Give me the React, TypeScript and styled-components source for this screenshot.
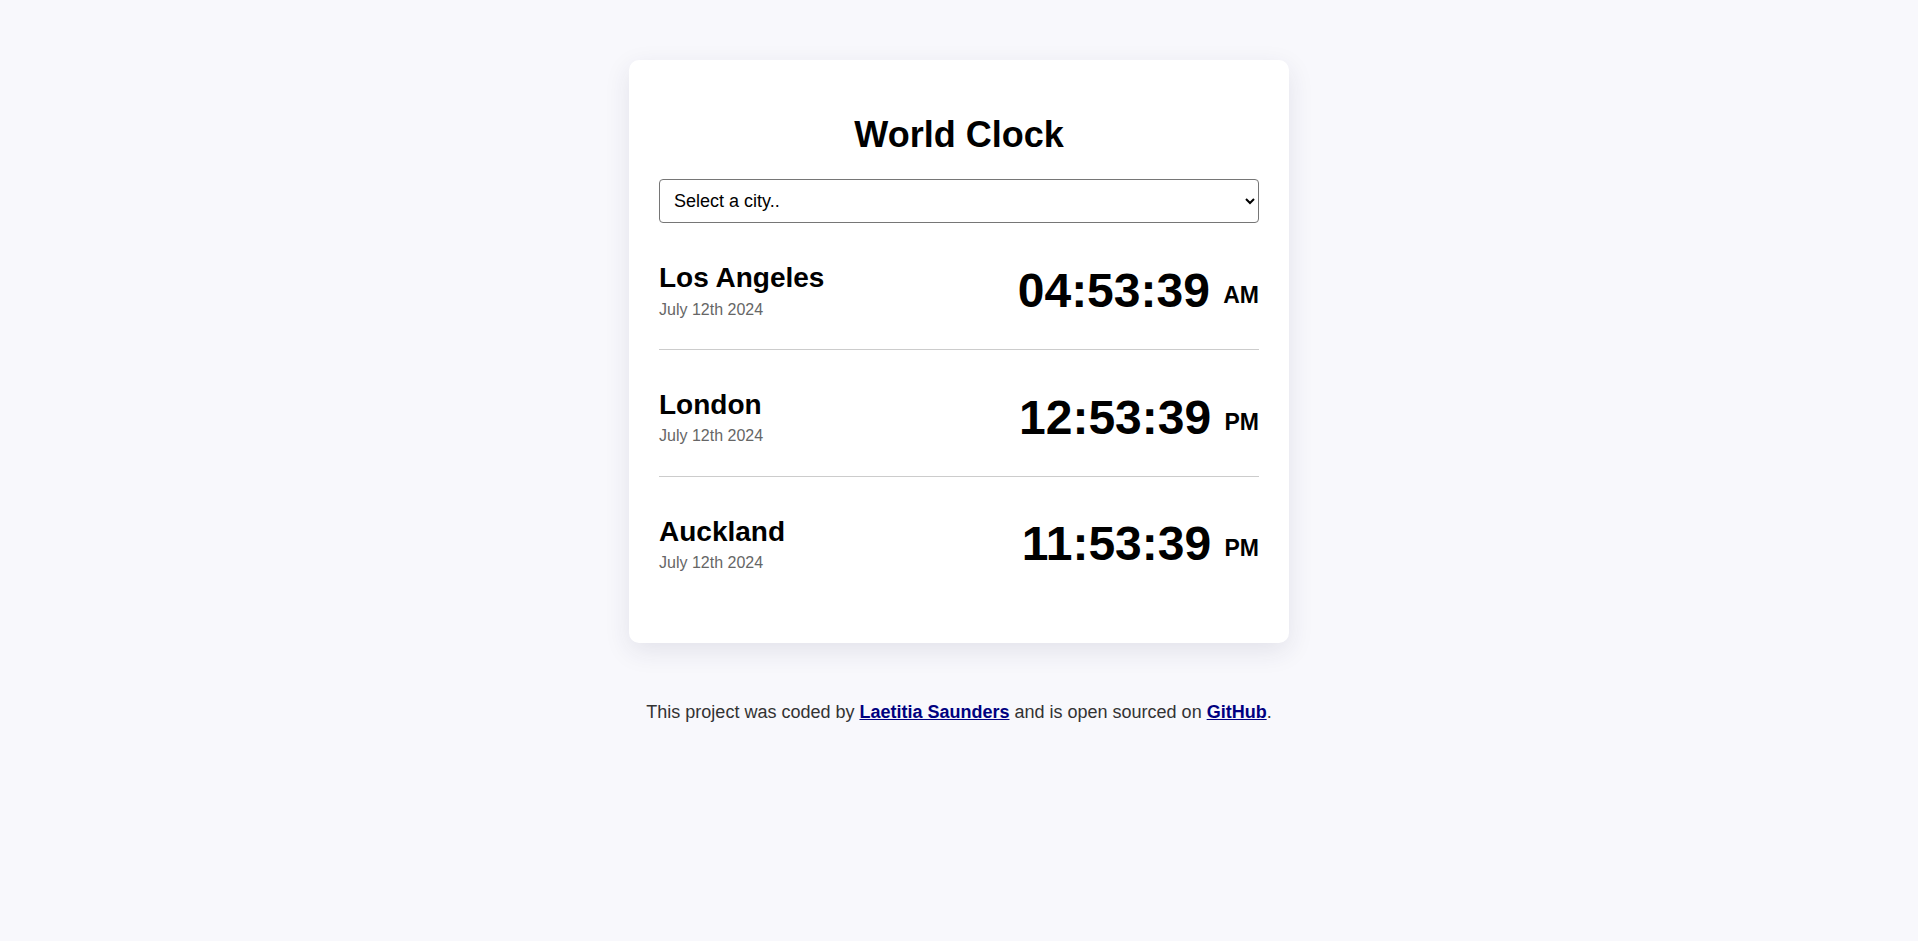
import styled, { createGlobalStyle } from "styled-components";

const GlobalStyle = createGlobalStyle`
  body {
    margin: 0;
    background: #f8f8fc;
    font-family: "Liberation Sans", Arial, sans-serif;
    color: #000;
  }
`;

const Page = styled.div`
  padding-top: 60px;
`;

const Card = styled.div`
  width: 600px;
  margin: 0 auto;
  padding: 54px 30px 41px;
  background: #fff;
  border-radius: 10px;
  box-shadow: 0 8px 26px rgba(40, 40, 80, 0.1);
`;

const Title = styled.h1`
  margin: 0 0 24px;
  font-size: 36px;
  line-height: 1.15;
  font-weight: 700;
  text-align: center;
`;

const CitySelect = styled.select`
  display: block;
  width: 100%;
  height: 44px;
  padding: 0 10px;
  font-family: "Liberation Sans", Arial, sans-serif;
  font-size: 18px;
  color: #000;
  background: #fff;
  border: 1px solid #767676;
  border-radius: 4px;
`;

const Row = styled.div<{ $last?: boolean }>`
  display: flex;
  justify-content: space-between;
  align-items: center;
  padding: 39px 0 30px;
  border-bottom: ${(p) => (p.$last ? "none" : "1px solid #ccc")};
`;

const CityName = styled.div`
  font-size: 28px;
  font-weight: 700;
  line-height: 1.15;
  margin-bottom: 6px;
`;

const CityDate = styled.div`
  font-size: 16px;
  line-height: 1.15;
  color: #666;
`;

const Time = styled.div`
  font-size: 48px;
  font-weight: 700;
  line-height: 1.15;
`;

const Meridiem = styled.span`
  font-size: 23px;
  vertical-align: 4px;
`;

const Footer = styled.footer`
  margin-top: 59px;
  text-align: center;
  font-size: 18px;
  line-height: 1.15;
  color: #333;

  a {
    color: #000080;
    font-weight: 700;
  }
`;

const cities = [
  { name: "Los Angeles", date: "July 12th 2024", time: "04:53:39", ampm: "AM" },
  { name: "London", date: "July 12th 2024", time: "12:53:39", ampm: "PM" },
  { name: "Auckland", date: "July 12th 2024", time: "11:53:39", ampm: "PM" },
];

export default function App() {
  return (
    <Page>
      <GlobalStyle />
      <Card>
        <Title>World Clock</Title>
        <CitySelect defaultValue="">
          <option value="">Select a city..</option>
          <option value="current">My current location</option>
          <option value="Europe/Paris">Paris</option>
          <option value="Asia/Tokyo">Tokyo</option>
          <option value="Australia/Sydney">Sydney</option>
        </CitySelect>
        {cities.map((c, i) => (
          <Row key={c.name} $last={i === cities.length - 1}>
            <div>
              <CityName>{c.name}</CityName>
              <CityDate>{c.date}</CityDate>
            </div>
            <Time>
              {c.time} <Meridiem>{c.ampm}</Meridiem>
            </Time>
          </Row>
        ))}
      </Card>
      <Footer>
        This project was coded by <a href="#">Laetitia Saunders</a> and is open
        sourced on <a href="#">GitHub</a>.
      </Footer>
    </Page>
  );
}
